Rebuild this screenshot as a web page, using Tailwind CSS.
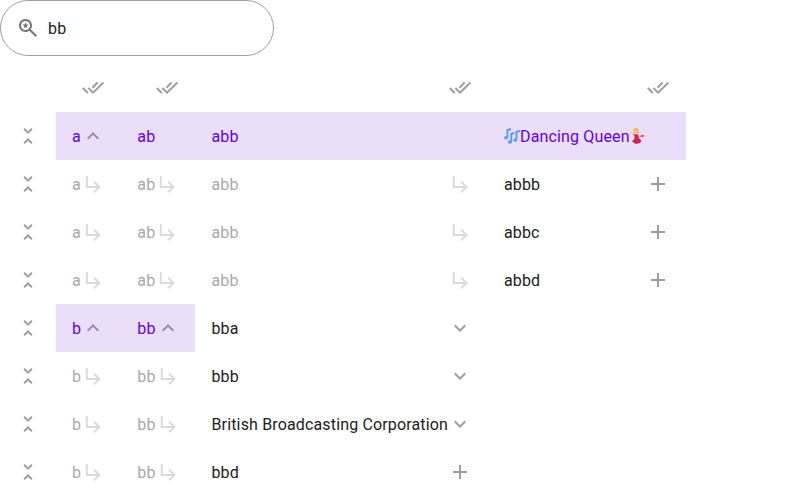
<!DOCTYPE html>
<html lang="en">
<head>
<meta charset="utf-8">
<title>Search</title>
<script src="https://cdn.jsdelivr.net/npm/@tailwindcss/browser@4"></script>
</head>
<body class="bg-white font-['Roboto',sans-serif] text-base tracking-[0.15px] text-[#212121] overflow-hidden">
<svg class="hidden">
  <symbol id="all" viewBox="0 0 24 24"><path d="M1.8 12l5 5M7.4 12l4.7 4.7L22.4 6.5M11.4 11.7l5.2-5.2" fill="none" stroke="currentColor" stroke-width="2"/></symbol>
  <symbol id="fold" viewBox="0 0 24 24"><path d="M7.41 18.59L8.83 20 12 16.83 15.17 20l1.41-1.41L12 14l-4.59 4.59zm9.18-13.18L15.17 4 12 7.17 8.83 4 7.41 5.41 12 10l4.59-4.59z" fill="currentColor"/></symbol>
  <symbol id="less" viewBox="0 0 24 24"><path d="M12 8l-6 6 1.41 1.41L12 10.83l4.59 4.58L18 14z" fill="currentColor"/></symbol>
  <symbol id="more" viewBox="0 0 24 24"><path d="M16.59 8.59L12 13.17 7.41 8.59 6 10l6 6 6-6z" fill="currentColor"/></symbol>
  <symbol id="add" viewBox="0 0 24 24"><path d="M19 13h-6v6h-2v-6H5v-2h6V5h2v6h6v2z" fill="currentColor"/></symbol>
  <symbol id="sub" viewBox="0 0 24 24"><path transform="translate(.8 0)" d="M19 15l-6 6-1.42-1.42L15.17 16H4V4h2v10h9.17l-3.59-3.58L13 9l6 6z" fill="currentColor"/></symbol>
  <symbol id="notes" viewBox="0 0 16 16"><g fill="#5d9cec"><ellipse cx="2" cy="9.8" rx="2" ry="1.7"/><ellipse cx="6" cy="14" rx="2.1" ry="1.8"/><ellipse cx="11.2" cy="12.1" rx="2" ry="1.7"/><path d="M2.5 1.2L7 0v2.2l-2.6.8v7H2.5zM6.3 5l4.2-1.1V6l-2.3.7V14H6.3zM11.5 3L16 1.9V4l-2.6.8V12h-1.9z"/></g></symbol>
  <symbol id="dancer" viewBox="0 0 16 16"><path d="M.2 3.8l3 2 2.5.2 3 1.8 6.5-.3.6.8-7.4 1-3.5-1.2L2.7 7z" fill="#efa276"/><path d="M3.5 2.2C3.8-.2 8-.5 8.4 2.2L8.8 5.2H4z" fill="#f0a64b"/><circle cx="5.7" cy="3.2" r="1.6" fill="#f9cf7a"/><path d="M4.3 6.2l4 .3.3 3L11.5 13l-1.5 2-4.2 1L2 13.4l2.6-3z" fill="#cf2456"/><path d="M11 7.3l2.7-.3-.5 1.8-2.5.3z" fill="#d63c60"/></symbol>
</svg>
<label class="flex h-14 w-[274px] items-center gap-2 rounded-full border border-[#9e9e9e] px-[15px]">
  <svg class="size-6 text-[#757575]" viewBox="0 0 24 24" fill="currentColor"><path d="M14.73 13.31C15.52 12.24 16 10.93 16 9.5 16 5.91 13.09 3 9.5 3S3 5.91 3 9.5 5.91 16 9.5 16c1.43 0 2.74-.48 3.81-1.27L19.59 21 21 19.59l-6.27-6.28zM9.5 14C7.01 14 5 11.99 5 9.5S7.01 5 9.5 5 14 7.01 14 9.5 11.99 14 9.5 14z"/><path d="M10.29 8.44L9.5 6l-.79 2.44H6.25l2.01 1.59-.77 2.47 2.01-1.53 2.01 1.53-.77-2.47 2.01-1.59z"/></svg>
  <span class="pt-0.5">bb</span>
</label>
<main id="grid" class="mt-2 grid w-[686px] grid-cols-[56px_65.3px_74.2px_292.5px_197.8px] auto-rows-[48px]"></main>
<script>
const icon = (n, c) => `<svg class="size-6 shrink-0 ${c}"><use href="#${n}"/></svg>`;
const emoji = (n, label) => `<svg class="size-4" role="img" aria-label="${label}"><use href="#${n}"/></svg>`;
const G = 'text-[#9e9e9e]', L = 'text-[#dbdbdb]', H = 'text-[#9a89ac]';
const P = 'bg-[#ebdefa] text-[#6200ee]', F = 'text-[#a9a9a9]', N = '';
const cell = (t, s, n, c) => `<div class="flex items-center justify-between whitespace-nowrap px-4 ${s}"><span class="flex items-center pt-0.5">${t}</span>${n ? icon(n, c) : ''}</div>`;
const queen = `<span class="-mt-0.5 flex">${emoji('notes', '🎶')}</span>Dancing Queen<span class="-mt-0.5 flex">${emoji('dancer', '💃')}</span>`;
const rows = [
  [['', N, 'all', G], ['', N, 'all', G], ['', N, 'all', G], ['', N, 'all', G]],
  [['a', P, 'less', H], ['ab', P], ['abb', P], [queen, P]],
  ...['abbb', 'abbc', 'abbd'].map(t => [['a', F, 'sub', L], ['ab', F, 'sub', L], ['abb', F, 'sub', L], [t, N, 'add', G]]),
  [['b', P, 'less', H], ['bb', P, 'less', H], ['bba', N, 'more', G], ['', N]],
  ...[['bbb', 'more'], ['British Broadcasting Corporation', 'more'], ['bbd', 'add']].map(([t, k]) => [['b', F, 'sub', L], ['bb', F, 'sub', L], [t, N, k, G], ['', N]])
];
document.getElementById('grid').innerHTML = rows.map((r, y) =>
  `<div class="flex items-center justify-center">${y ? icon('fold', G) : ''}</div>` + r.map(c => cell(...c)).join('')).join('');
</script>
</body>
</html>
